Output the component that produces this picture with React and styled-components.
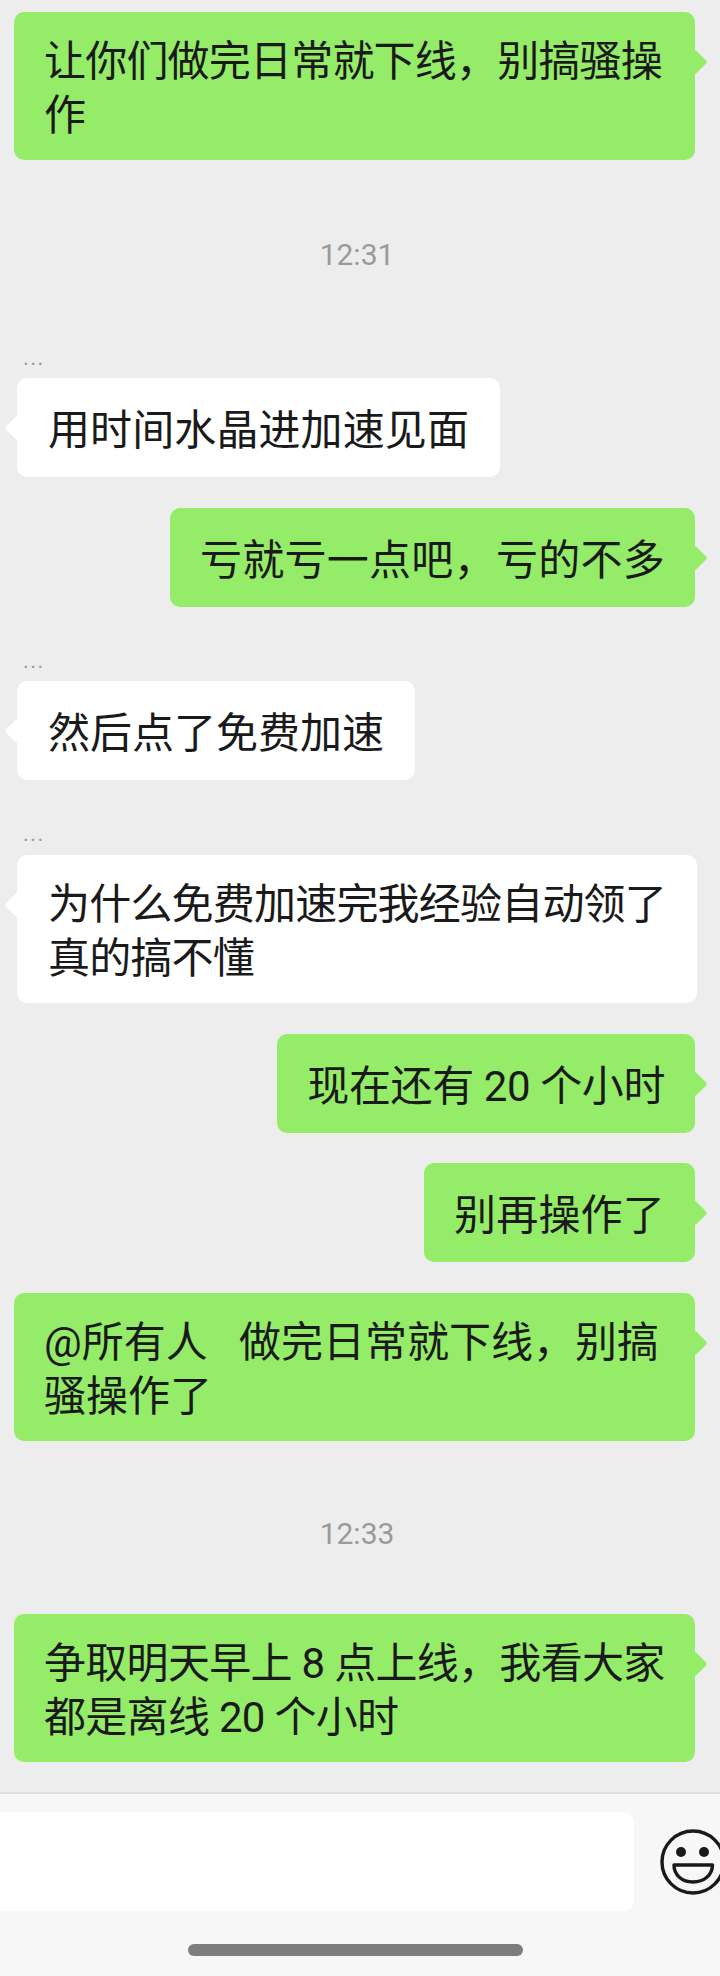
import React from "react";
import styled, { createGlobalStyle } from "styled-components";

const COMMA = "\uFF0C";

const Global = createGlobalStyle`
  html, body { margin: 0; padding: 0; background: #ededed; }
  body { overflow: hidden; }
`;

const Page = styled.div`
  width: 720px;
  height: 1976px;
  display: flex;
  flex-direction: column;
  overflow: hidden;
  background: #ededed;
  font-family: Roboto, "Noto Sans CJK SC", sans-serif;
`;

const Messages = styled.main`
  flex: 1;
  display: flex;
  flex-direction: column;
  padding-top: 12px;
`;

const Timestamp = styled.div`
  height: 40px;
  margin-top: ${(p) => p.$top}px;
  font-size: 30px;
  line-height: 40px;
  text-align: center;
  color: #9a9a9a;
  padding-right: 6px;
`;

const SenderName = styled.div`
  height: 20px;
  margin: ${(p) => p.$top}px 0 ${(p) => p.$gap || 4}px 23px;
  font-size: 22px;
  line-height: 8px;
  letter-spacing: 1.4px;
  color: #9a9a9a;
`;

const Bubble = styled.div`
  position: relative;
  box-sizing: border-box;
  min-height: 99px;
  display: flex;
  align-items: center;
  width: fit-content;
  max-width: ${(p) => (p.$mine ? 681 : 680)}px;
  margin-top: ${(p) => p.$top || 0}px;
  margin-left: ${(p) => (p.$mine ? "auto" : "17px")};
  margin-right: ${(p) => (p.$mine ? "25px" : "0")};
  padding: 23px ${(p) => (p.$mine ? "30px" : "31px")} 17px;
  border-radius: 10px;
  background: ${(p) => (p.$mine ? "#95ec69" : "#ffffff")};
  color: #1a1a1a;
  font-size: 42px;
  line-height: 54px;
  letter-spacing: ${(p) => p.$spacing || 0}px;

  &::before {
    content: "";
    position: absolute;
    top: 41px;
    ${(p) => (p.$mine ? "right: -9px;" : "left: -9px;")}
    width: 18px;
    height: 18px;
    border-radius: 3px;
    background: inherit;
    transform: rotate(45deg);
  }
`;

const Footer = styled.footer`
  height: 184px;
  box-sizing: border-box;
  border-top: 2px solid #dddddd;
  background: #f7f7f7;
  padding-top: 18px;
`;

const InputRow = styled.div`
  display: flex;
  align-items: center;
`;

const InputBox = styled.div`
  width: 634px;
  height: 99px;
  flex-shrink: 0;
  background: #ffffff;
  border-radius: 0 10px 10px 0;
`;

const EmojiIcon = styled.svg`
  width: 66px;
  height: 66px;
  flex-shrink: 0;
  margin-left: 26px;
`;

const HomeBarRow = styled.div`
  padding: 33px 0 0 188px;
`;

const HomeBar = styled.div`
  width: 335px;
  height: 12px;
  border-radius: 6px;
  background: #7d7d7d;
`;

export default function App() {
  return (
    <Page>
      <Global />
      <Messages>
        <Bubble $mine $spacing={-0.8}>{`让你们做完日常就下线${COMMA}别搞骚操作`}</Bubble>
        <Timestamp $top={75}>12:31</Timestamp>
        <SenderName $top={79}>...</SenderName>
        <Bubble $spacing={0.1}>用时间水晶进加速见面</Bubble>
        <Bubble $mine $top={31} $spacing={0.27}>{`亏就亏一点吧${COMMA}亏的不多`}</Bubble>
        <SenderName $top={50}>...</SenderName>
        <Bubble>然后点了免费加速</Bubble>
        <SenderName $top={50} $gap={5}>...</SenderName>
        <Bubble $spacing={-0.8}>为什么免费加速完我经验自动领了真的搞不懂</Bubble>
        <Bubble $mine $top={31} $spacing={-0.4}>现在还有 20 个小时</Bubble>
        <Bubble $mine $top={30} $spacing={0.2}>别再操作了</Bubble>
        <Bubble $mine $top={31}>{`@所有人\u00A0\u00A0\u00A0做完日常就下线${COMMA}别搞骚操作了`}</Bubble>
        <Timestamp $top={73}>12:33</Timestamp>
        <Bubble $mine $top={60} $spacing={-0.7}>{`争取明天早上 8 点上线${COMMA}我看大家都是离线 20 个小时`}</Bubble>
      </Messages>
      <Footer>
        <InputRow>
          <InputBox />
          <EmojiIcon viewBox="0 0 66 66" fill="none" stroke="#1a1a1a" strokeWidth="3.4">
            <circle cx="33" cy="33" r="31" />
            <circle cx="21" cy="23" r="5" fill="#1a1a1a" stroke="none" />
            <circle cx="44" cy="23" r="5" fill="#1a1a1a" stroke="none" />
            <path d="M14 36 H52.5 C52.5 46 44 53 33 53 C22 53 14 46 14 36 Z" strokeLinejoin="round" />
          </EmojiIcon>
        </InputRow>
        <HomeBarRow>
          <HomeBar />
        </HomeBarRow>
      </Footer>
    </Page>
  );
}
